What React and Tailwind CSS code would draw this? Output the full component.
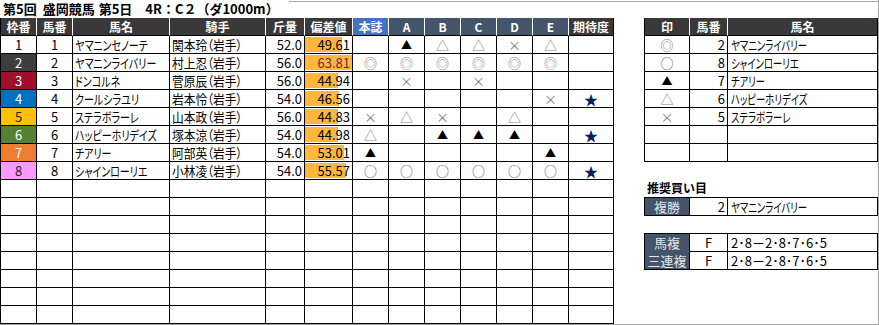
const FONT = "font-['Noto_Sans_CJK_JP','Noto_Sans',sans-serif]";
const PALT = "[font-feature-settings:'palt']";

const COLS = 'grid grid-cols-[36px_36px_97px_96px_39px_48px_36px_36px_36px_36px_36px_36px_45px]';

const frameStyle = {
  1: 'bg-white text-black',
  2: 'bg-[#3d3d3d] text-white',
  3: 'bg-[#a0102c] text-white',
  4: 'bg-[#0070c0] text-white',
  5: 'bg-[#ffc000] text-[#262626]',
  6: 'bg-[#548235] text-white',
  7: 'bg-[#ed7d31] text-white',
  8: 'bg-[#ff99ff] text-[#262626]',
};

const horses = [
  { no: 1, name: 'ヤマニンセノーテ', jockey: '関本玲（岩手）', kg: '52.0', dev: 49.61, marks: ['', '▲', '△', '△', '×', '△'], star: false },
  { no: 2, name: 'ヤマニンライバリー', jockey: '村上忍（岩手）', kg: '56.0', dev: 63.81, marks: ['◎', '◎', '◎', '◎', '◎', '◎'], star: false },
  { no: 3, name: 'ドンコルネ', jockey: '菅原辰（岩手）', kg: '56.0', dev: 44.94, marks: ['', '×', '', '×', '', ''], star: false },
  { no: 4, name: 'クールシラユリ', jockey: '岩本怜（岩手）', kg: '54.0', dev: 46.56, marks: ['', '', '', '', '', '×'], star: true },
  { no: 5, name: 'ステラボラーレ', jockey: '山本政（岩手）', kg: '56.0', dev: 44.83, marks: ['×', '△', '×', '', '△', ''], star: false },
  { no: 6, name: 'ハッピーホリデイズ', jockey: '塚本涼（岩手）', kg: '54.0', dev: 44.98, marks: ['△', '', '▲', '▲', '▲', ''], star: true },
  { no: 7, name: 'チアリー', jockey: '阿部英（岩手）', kg: '54.0', dev: 53.01, marks: ['▲', '', '', '', '', '▲'], star: false },
  { no: 8, name: 'シャインローリエ', jockey: '小林凌（岩手）', kg: '54.0', dev: 55.57, marks: ['○', '○', '○', '○', '○', '○'], star: true },
];

const MAX_DEV = 63.81;

function markColor(m) {
  if (m === '▲') return 'text-black text-[11px]';
  if (m === '○') return 'text-[#595959] text-[13px]';
  return 'text-[#808080] text-[13px]';
}

const cell = 'h-[18px] border-r border-b border-black flex items-center leading-none';
const head = 'h-[18px] border-r border-white border-b border-b-black flex items-center justify-center font-bold text-white text-[12px] leading-none';

// katakana in the sheet are set in a condensed face
function Narrow({ children, scale = 'scale-x-[0.77]' }) {
  return (
    <span className={`inline-block origin-left whitespace-nowrap ${PALT} ${scale}`}>
      {children}
    </span>
  );
}

function HorseRow({ h }) {
  const barW = (h.dev / MAX_DEV) * 47;
  return (
    <>
      <div className={`${cell} justify-center ${frameStyle[h.no]}`}>{h.no}</div>
      <div className={`${cell} justify-center`}>{h.no}</div>
      <div className={`${cell} pl-[2px] overflow-hidden`}><Narrow>{h.name}</Narrow></div>
      <div className={`${cell} pl-[2px] overflow-hidden`}><Narrow scale="scale-x-[0.9]">{h.jockey}</Narrow></div>
      <div className={`${cell} justify-end pr-[2px]`}>{h.kg}</div>
      <div className={`${cell} py-px`}>
        <div
          className={`h-full w-full flex items-center justify-end pr-[2px] ${h.dev === MAX_DEV ? 'text-[#6e2456]' : ''}`}
          style={{ background: `linear-gradient(to right, #fdb73c 0 ${barW}px, #ffffff ${barW}px)` }}
        >
          {h.dev.toFixed(2)}
        </div>
      </div>
      {h.marks.map((m, i) => (
        <div key={i} className={`${cell} justify-center ${markColor(m)}`}>{m}</div>
      ))}
      <div className={`${cell} justify-center text-[#002060] text-[14px]`}>{h.star ? '★' : ''}</div>
    </>
  );
}

function EmptyRow() {
  return (
    <>
      {Array.from({ length: 13 }).map((_, i) => (
        <div key={i} className={cell} />
      ))}
    </>
  );
}

function RaceTable() {
  return (
    <div className={`${COLS} w-[614px] border-l border-black text-[13px] text-black`}>
      <div className={`${head} bg-[#3a3838]`}>枠番</div>
      <div className={`${head} bg-[#3a3838]`}>馬番</div>
      <div className={`${head} bg-[#3a3838]`}>馬名</div>
      <div className={`${head} bg-[#3a3838]`}>騎手</div>
      <div className={`${head} bg-[#3a3838]`}>斤量</div>
      <div className={`${head} bg-[#3a3838]`}>偏差値</div>
      <div className={`${head} bg-[#4472c4]`}>本誌</div>
      {['A', 'B', 'C', 'D', 'E'].map((k) => (
        <div key={k} className={`${head} bg-[#44546a]`}>{k}</div>
      ))}
      <div className={`${head} bg-[#3a3838] border-r-black`}>期待度</div>
      {horses.map((h) => (
        <HorseRow key={h.no} h={h} />
      ))}
      {Array.from({ length: 8 }).map((_, i) => (
        <EmptyRow key={i} />
      ))}
    </div>
  );
}

const picks = [
  { mark: '◎', no: 2, name: 'ヤマニンライバリー' },
  { mark: '○', no: 8, name: 'シャインローリエ' },
  { mark: '▲', no: 7, name: 'チアリー' },
  { mark: '△', no: 6, name: 'ハッピーホリデイズ' },
  { mark: '×', no: 5, name: 'ステラボラーレ' },
  { mark: '', no: '', name: '' },
  { mark: '', no: '', name: '' },
];

const RCOLS = 'grid grid-cols-[45px_38px_150px]';
const label = 'h-[18px] bg-[#44546a] text-[#e7e6e6] text-[13px] flex items-center justify-center border-r border-black leading-none whitespace-nowrap';
const plain = 'h-[18px] border-r border-b border-black flex items-center leading-none whitespace-nowrap';

function PicksPanel() {
  return (
    <div className="w-[234px] text-[13px] text-black">
      <div className={`${RCOLS} border-l border-black`}>
        <div className={`${head} bg-[#3a3838]`}>印</div>
        <div className={`${head} bg-[#3a3838]`}>馬番</div>
        <div className={`${head} bg-[#3a3838] border-r-black`}>馬名</div>
        {picks.map((p, i) => (
          <div key={i} className="contents">
            <div className={`${cell} justify-center ${markColor(p.mark)}`}>{p.mark}</div>
            <div className={`${cell} justify-end pr-[2px]`}>{p.no}</div>
            <div className={`${cell} pl-[3px]`}><Narrow scale="scale-x-[0.72]">{p.name}</Narrow></div>
          </div>
        ))}
      </div>

      <div className="h-[35px] flex items-end pl-[3px] pb-[3px] font-bold text-[12px] leading-none">推奨買い目</div>

      <div className={`${RCOLS} border-l border-t border-black`}>
        <div className={`${label} border-b border-b-black`}>複勝</div>
        <div className={`${plain} justify-end pr-[2px]`}>2</div>
        <div className={`${plain} pl-[3px]`}><Narrow scale="scale-x-[0.72]">ヤマニンライバリー</Narrow></div>
      </div>

      <div className="h-[17px]" />

      <div className={`${RCOLS} border-l border-t border-black`}>
        <div className={`${label} border-b border-b-[#44546a]`}>馬複</div>
        <div className={`${plain} justify-center`}>F</div>
        <div className={`${plain} pl-[3px]`}>2･8－2･8･7･6･5</div>
        <div className={`${label} border-b border-b-black`}>三連複</div>
        <div className={`${plain} justify-center`}>F</div>
        <div className={`${plain} pl-[3px]`}>2･8－2･8･7･6･5</div>
      </div>
    </div>
  );
}

export default function App() {
  return (
    <div className={`w-[879px] h-[325px] bg-white overflow-hidden border-r border-b border-[#a6a6a6] ${FONT}`}>
      <div className="h-[18px] flex items-start">
        <div className="flex items-center h-[18px] pl-[3px] font-bold text-[13px] leading-[18px] text-black whitespace-nowrap">
          <span>第5回</span>
          <span className="ml-[6px]">盛岡競馬</span>
          <span className="ml-[4px]">第5日</span>
          <span className="ml-[13px]">4R：C２（ダ1000m）</span>
        </div>
        <div className="flex-1 ml-[10px] mt-[1px] border-t border-[#a6a6a6]" />
      </div>
      <div className="flex gap-[30px]">
        <RaceTable />
        <PicksPanel />
      </div>
    </div>
  );
}
